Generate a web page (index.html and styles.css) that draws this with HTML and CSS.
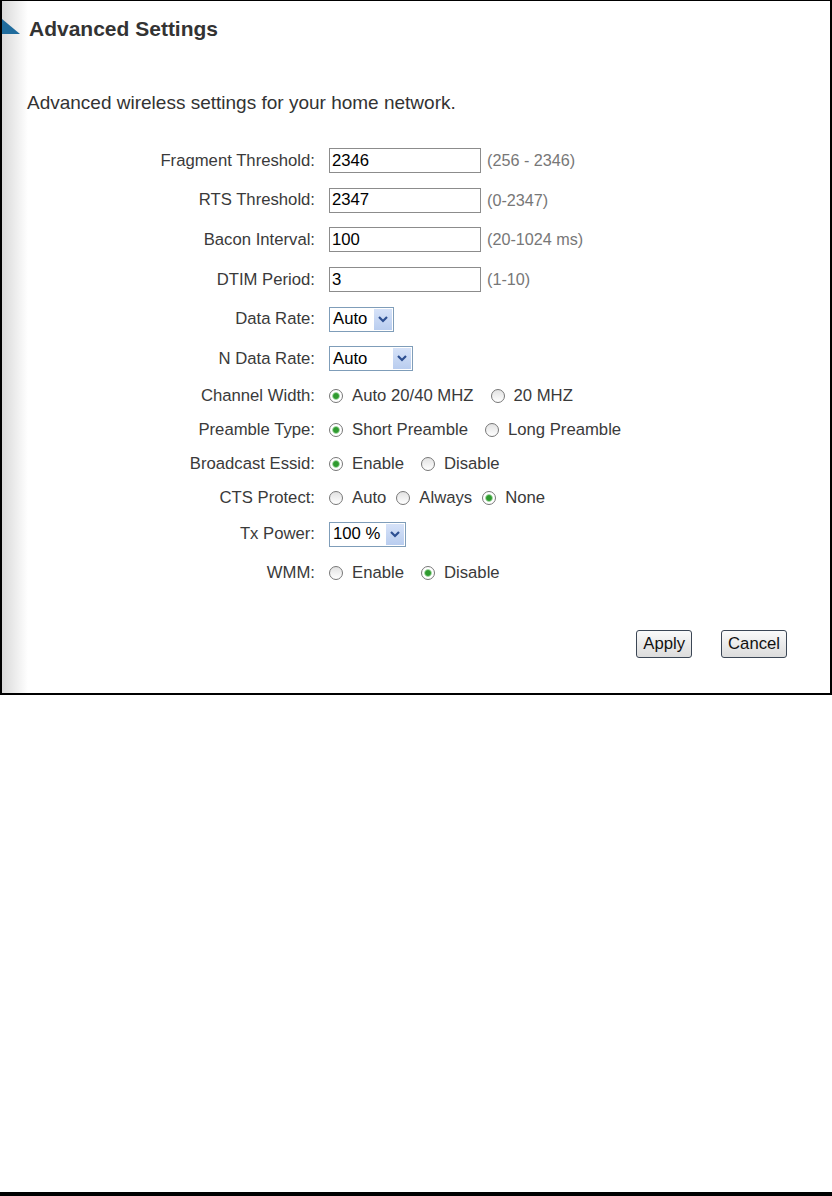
FILE: index.html
```html
<!DOCTYPE html>
<html lang="en">
<head>
    <meta charset="UTF-8">
    <meta name="viewport" content="width=device-width, initial-scale=1.0">
    <title>Advanced Settings</title>
    <link rel="stylesheet" href="styles.css">
</head>
<body>
    <div class="panel">
        <h1 class="title">
            <svg width="18" height="15" viewBox="0 0 18 15"><polygon points="0,0 18,15 0,15"/></svg>
            Advanced Settings
        </h1>

        <p class="intro">Advanced wireless settings for your home network.</p>

        <form class="settings">
            <div class="row">
                <label>Fragment Threshold:</label>
                <input class="text" type="text" value="2346">
                <span class="hint">(256 - 2346)</span>
            </div>
            <div class="row">
                <label>RTS Threshold:</label>
                <input class="text" type="text" value="2347">
                <span class="hint">(0-2347)</span>
            </div>
            <div class="row">
                <label>Bacon Interval:</label>
                <input class="text" type="text" value="100">
                <span class="hint">(20-1024 ms)</span>
            </div>
            <div class="row">
                <label>DTIM Period:</label>
                <input class="text" type="text" value="3">
                <span class="hint">(1-10)</span>
            </div>
            <div class="row">
                <label>Data Rate:</label>
                <div class="select short">
                    <span>Auto</span>
                    <span class="arrow"><svg width="10" height="7" viewBox="0 0 10 7"><polyline points="1,1 5,5 9,1"/></svg></span>
                </div>
            </div>
            <div class="row">
                <label>N Data Rate:</label>
                <div class="select wide">
                    <span>Auto</span>
                    <span class="arrow"><svg width="10" height="7" viewBox="0 0 10 7"><polyline points="1,1 5,5 9,1"/></svg></span>
                </div>
            </div>
            <div class="row opts">
                <label>Channel Width:</label>
                <span class="opt"><input class="radio" type="radio" name="width" checked>Auto 20/40 MHZ</span>
                <span class="opt"><input class="radio" type="radio" name="width">20 MHZ</span>
            </div>
            <div class="row opts">
                <label>Preamble Type:</label>
                <span class="opt"><input class="radio" type="radio" name="preamble" checked>Short Preamble</span>
                <span class="opt"><input class="radio" type="radio" name="preamble">Long Preamble</span>
            </div>
            <div class="row opts">
                <label>Broadcast Essid:</label>
                <span class="opt"><input class="radio" type="radio" name="essid" checked>Enable</span>
                <span class="opt"><input class="radio" type="radio" name="essid">Disable</span>
            </div>
            <div class="row opts tight">
                <label>CTS Protect:</label>
                <span class="opt"><input class="radio" type="radio" name="cts">Auto</span>
                <span class="opt"><input class="radio" type="radio" name="cts">Always</span>
                <span class="opt"><input class="radio" type="radio" name="cts" checked>None</span>
            </div>
            <div class="row">
                <label>Tx Power:</label>
                <div class="select mid">
                    <span>100 %</span>
                    <span class="arrow"><svg width="10" height="7" viewBox="0 0 10 7"><polyline points="1,1 5,5 9,1"/></svg></span>
                </div>
            </div>
            <div class="row opts">
                <label>WMM:</label>
                <span class="opt"><input class="radio" type="radio" name="wmm">Enable</span>
                <span class="opt"><input class="radio" type="radio" name="wmm" checked>Disable</span>
            </div>
        </form>

        <div class="actions">
            <button type="button">Apply</button>
            <button type="button">Cancel</button>
        </div>
    </div>

    <div class="page-end"></div>
</body>
</html>
```

FILE: styles.css
```css
body {
    margin: 0;
    font-family: "Liberation Sans", Arial, sans-serif;
    background: #fff;
}
.panel {
    box-sizing: border-box;
    width: 832px;
    height: 695px;
    border: 2px solid #000;
    border-top-width: 1px;
    background: linear-gradient(to right, #d9d9d9, #fff 26px);
}
.title {
    display: flex;
    align-items: flex-start;
    gap: 9px;
    margin: 16px 0 0;
    font-size: 21px;
    line-height: 24px;
    font-weight: bold;
    color: #333;
}
.title svg {
    margin-top: 2px;
    fill: #1f6b9c;
}
.intro {
    margin: 51px 0 0 25px;
    font-size: 19px;
    line-height: 22px;
    color: #333;
}
.settings {
    margin-top: 27px;
    font-size: 16.7px;
    color: #3a3a3a;
}
.row {
    display: flex;
    align-items: center;
    height: 39.6px;
}
.row.opts {
    height: 34px;
}
.row.opts:last-child {
    height: 38px;
}
.row label {
    width: 313px;
    margin-right: 14px;
    text-align: right;
}
.text {
    box-sizing: border-box;
    width: 152px;
    height: 25px;
    margin: 0;
    padding: 0 2px;
    border: 1px solid #8c8c8c;
    font: inherit;
    color: #000;
}
.hint {
    margin-left: 6px;
    font-size: 16.2px;
    color: #777;
}
.select {
    box-sizing: border-box;
    display: flex;
    align-items: center;
    height: 25px;
    padding: 1px 1px 1px 3px;
    border: 1px solid #7f9db9;
    background: #fff;
    color: #000;
}
.select.short { width: 65px; }
.select.mid { width: 77px; }
.select.wide { width: 84px; }
.select .arrow {
    display: flex;
    align-items: center;
    justify-content: center;
    width: 18px;
    height: 21px;
    margin-left: auto;
    background: linear-gradient(#d6e2f8, #b9cdef);
}
.select .arrow svg {
    fill: none;
    stroke: #2d4f91;
    stroke-width: 2.2;
}
.opt {
    display: inline-flex;
    align-items: center;
    gap: 9px;
    margin-right: 17px;
}
.tight .opt {
    margin-right: 10px;
}
.radio {
    appearance: none;
    box-sizing: border-box;
    width: 14px;
    height: 14px;
    margin: 0;
    border: 1px solid #777;
    border-radius: 50%;
    background: linear-gradient(#e2e2e2, #fff);
}
.radio:checked {
    background: radial-gradient(circle, #2f9a2f 0 2.4px, #8fcf8f 3.3px, #fff 4.2px);
}
.actions {
    display: flex;
    justify-content: flex-end;
    gap: 29px;
    margin-top: 38px;
    padding-right: 43px;
}
.actions button {
    height: 28px;
    padding: 0 6px;
    border: 1px solid #3b4655;
    border-radius: 3px;
    background: linear-gradient(#fafafa, #dcdcdc);
    font-family: inherit;
    font-size: 16.7px;
    color: #111;
}
.page-end {
    margin-top: 497px;
    height: 4px;
    background: #000;
}
```
